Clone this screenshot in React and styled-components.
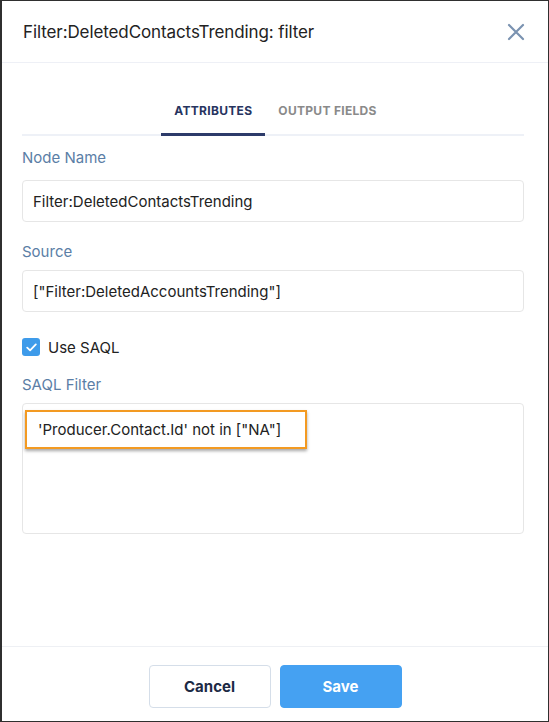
import React from 'react';
import styled, { createGlobalStyle } from 'styled-components';

const GlobalStyle = createGlobalStyle`
  html, body {
    margin: 0;
    padding: 0;
    background: #fff;
  }
  * {
    box-sizing: border-box;
  }
`;

const Frame = styled('div')`
  width: 549px;
  height: 722px;
  display: flex;
  flex-direction: column;
  background: #fff;
  border: 1px solid #2f2f2f;
  border-left-width: 2px;
  font-family: Inter, 'Helvetica Neue', Arial, sans-serif;
  color: #1f1f1f;
`;

const Header = styled('header')`
  height: 62px;
  flex-shrink: 0;
  display: flex;
  align-items: center;
  justify-content: space-between;
  padding: 0 22px 0 21px;
  border-bottom: 1px solid #eef0f6;
`;

const Title = styled('h1')`
  margin: 0;
  font-size: 17px;
  font-weight: 400;
  color: #222;
  letter-spacing: -0.1px;
`;

const CloseButton = styled('button')`
  border: none;
  background: none;
  padding: 0;
  width: 20px;
  height: 20px;
  display: flex;
  align-items: center;
  justify-content: center;
  color: #7b93b1;
  cursor: pointer;
`;

const Body = styled('main')`
  flex: 1;
  padding: 40px 24px 0 20px;
`;

const Tabs = styled('nav')`
  display: flex;
  justify-content: center;
  padding-left: 5px;
  border-bottom: 2px solid #eef1f7;
`;

const Tab = styled('button')`
  border: none;
  background: none;
  margin-bottom: -2px;
  padding: 0 13px 14px;
  font-family: inherit;
  font-size: 12px;
  line-height: 16px;
  font-weight: 700;
  letter-spacing: 0.3px;
  text-transform: uppercase;
  color: ${({ active }) => (active ? '#27345f' : '#8a8a8a')};
  border-bottom: 3px solid ${({ active }) => (active ? '#2d3b6a' : 'transparent')};
  cursor: pointer;
`;

const Field = styled('div')`
  margin-top: ${({ top }) => top}px;
`;

const Label = styled('label')`
  display: block;
  font-size: 15px;
  line-height: 20px;
  color: #5b7ea6;
  margin-bottom: ${({ gap }) => gap || 12}px;
`;

const Input = styled('div')`
  height: 42px;
  display: flex;
  align-items: center;
  padding: 0 10px;
  border: 1px solid #e6e6e6;
  border-radius: 4px;
  font-size: 15px;
  color: #222;
`;

const TextArea = styled('div')`
  position: relative;
  height: 131px;
  border: 1px solid #e6e6e6;
  border-radius: 4px;
`;

const Highlight = styled('div')`
  position: absolute;
  left: 2px;
  top: 6px;
  width: 282px;
  height: 39px;
  display: flex;
  align-items: center;
  padding-left: 11px;
  background: #fff;
  border: 2px solid #f39a22;
  box-shadow: 0 2px 3px rgba(0, 0, 0, 0.35);
  font-size: 15px;
  color: #222;
`;

const CheckRow = styled('div')`
  display: flex;
  align-items: center;
  gap: 8px;
  height: 18px;
  margin-top: 26px;
  font-size: 15px;
  color: #222;
`;

const CheckBox = styled('span')`
  width: 18px;
  height: 18px;
  border-radius: 3px;
  background: #3e9bea;
  display: flex;
  align-items: center;
  justify-content: center;
`;

const Footer = styled('footer')`
  height: 75px;
  flex-shrink: 0;
  display: flex;
  justify-content: center;
  gap: 9px;
  padding-top: 18px;
  border-top: 1px solid #eef0f4;
`;

const Button = styled('button')`
  width: 122px;
  height: 43px;
  border-radius: 4px;
  font-family: inherit;
  font-size: 15px;
  font-weight: 700;
  cursor: pointer;
  border: 1px solid ${({ primary }) => (primary ? '#45a1f2' : '#d5dee9')};
  background: ${({ primary }) => (primary ? '#45a1f2' : '#fff')};
  color: ${({ primary }) => (primary ? '#fff' : '#1c2a45')};
`;

const App = () => {
  return (
    <>
      <GlobalStyle />
      <Frame>
        <Header>
          <Title>Filter:DeletedContactsTrending: filter</Title>
          <CloseButton aria-label="Close">
            <svg width="18" height="18" viewBox="0 0 18 18">
              <path d="M2 2 L16 16 M16 2 L2 16" stroke="currentColor" strokeWidth="2.2" strokeLinecap="round" />
            </svg>
          </CloseButton>
        </Header>
        <Body>
          <Tabs>
            <Tab active>Attributes</Tab>
            <Tab>Output Fields</Tab>
          </Tabs>
          <Field top={12}>
            <Label>Node Name</Label>
            <Input>Filter:DeletedContactsTrending</Input>
          </Field>
          <Field top={20}>
            <Label gap={8}>Source</Label>
            <Input>["Filter:DeletedAccountsTrending"]</Input>
          </Field>
          <CheckRow>
            <CheckBox>
              <svg width="11" height="9" viewBox="0 0 11 9">
                <path d="M1.2 4.6 L4.1 7.3 L9.8 1.4" fill="none" stroke="#fff" strokeWidth="1.8" strokeLinecap="round" strokeLinejoin="round" />
              </svg>
            </CheckBox>
            Use SAQL
          </CheckRow>
          <Field top={19}>
            <Label gap={8}>SAQL Filter</Label>
            <TextArea>
              <Highlight>'Producer.Contact.Id' not in ["NA"]</Highlight>
            </TextArea>
          </Field>
        </Body>
        <Footer>
          <Button>Cancel</Button>
          <Button primary>Save</Button>
        </Footer>
      </Frame>
    </>
  );
};

export default App;
